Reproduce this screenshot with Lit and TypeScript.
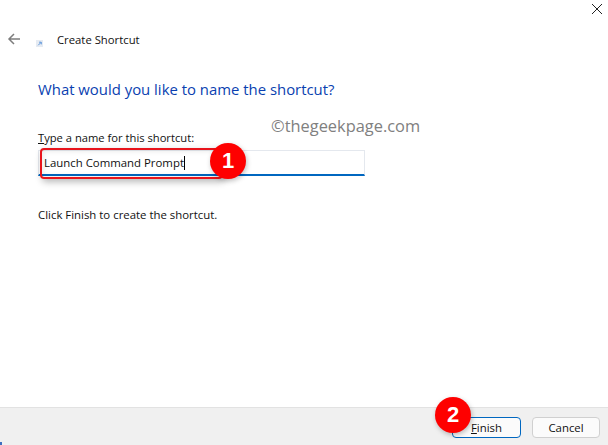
import { LitElement, html, css } from "lit";
import { customElement } from "lit/decorators.js";

@customElement("app-root")
export class AppRoot extends LitElement {
  static styles = css`
    :host {
      display: flex;
      flex-direction: column;
      width: 608px;
      height: 445px;
      position: relative;
      overflow: hidden;
      background: #fff;
      font-family: "Open Sans", "Noto Sans", sans-serif;
      font-size: 11.4px;
      color: #111;
    }
    .close {
      position: absolute;
      left: 590px;
      top: 2px;
      width: 14px;
      height: 14px;
    }
    .nav {
      display: flex;
      align-items: center;
      padding: 31px 0 0 7px;
      height: 18px;
    }
    .back { width: 14px; height: 14px; display: block; margin-top: -2px; }
    .sicon { width: 7px; height: 7px; margin: 6px 1px 0 15px; display: block; }
    .navtitle { margin: -2px 0 0 13px; font-size: 11.3px; }
    .body {
      flex: 1;
      display: flex;
      flex-direction: column;
      padding: 0 0 0 38px;
    }
    h1 {
      margin: 30px 0 0;
      font-size: 14.9px;
      line-height: 20px;
      font-weight: 400;
      color: #0a3fb0;
    }
    .label { margin-top: 31px; line-height: 16px; font-size: 11.2px; }
    .label u { text-decoration-thickness: 1px; }
    .input {
      position: relative;
      margin-top: 4px;
      width: 327px;
      height: 26px;
      box-sizing: border-box;
      border: 1px solid #e4e8ee;
      border-bottom: 2px solid #0067c0;
      display: flex;
      align-items: center;
      padding-left: 5px;
    }
    .caret {
      display: inline-block;
      width: 1px;
      height: 14px;
      background: #000;
    }
    .hint { margin-top: 31px; line-height: 16px; }
    .mark {
      position: absolute;
      left: 271px;
      top: 116px;
      font-size: 16.4px;
      color: #808080;
      line-height: 20px;
    }
    .footer {
      height: 37px;
      background: #f0f0f0;
      border-top: 1px solid #e2e2e2;
      display: flex;
      justify-content: flex-end;
      align-items: center;
      gap: 11px;
      padding: 0 8px 0 0;
    }
    .btn {
      width: 68px;
      height: 21px;
      box-sizing: border-box;
      margin-top: 1px;
      border-radius: 4px;
      background: #fbfbfb;
      border: 1px solid #d0d0d0;
      display: flex;
      align-items: center;
      justify-content: center;
    }
    .btn.primary { width: 69px; border-color: #0067c0; }
    .hl {
      position: absolute;
      left: 40px;
      top: 148px;
      width: 183px;
      height: 31px;
      box-sizing: border-box;
      border: 2px solid #e8141c;
      border-radius: 4px;
      box-shadow: 2px 3px 7px rgba(0, 0, 0, 0.28), inset 0 0 6px rgba(0, 0, 0, 0.12);
    }
    .badge {
      position: absolute;
      width: 36px;
      height: 36px;
      border-radius: 50%;
      background: #fe0000;
      color: #fff;
      font-family: "Liberation Sans", sans-serif;
      font-weight: 700;
      font-size: 22px;
      display: flex;
      align-items: center;
      justify-content: center;
      box-shadow: 1px 2px 5px rgba(0, 0, 0, 0.25);
    }
    .b1 { left: 210px; top: 143px; }
    .b2 { left: 435px; top: 397px; }
    .corner {
      position: absolute;
      left: 0;
      bottom: 0;
      width: 2px;
      height: 3px;
      background: #3f6fc0;
    }
  `;

  render() {
    return html`
      <svg class="close" viewBox="0 0 14 14" fill="none" stroke="#222" stroke-width="1">
        <path d="M2 2l10 10M12 2L2 12" />
      </svg>
      <div class="nav">
        <svg class="back" viewBox="0 0 14 14" fill="none" stroke="#7d7d7d" stroke-width="1.5">
          <path d="M13 7H2M7 2L2 7l5 5" />
        </svg>
        <svg class="sicon" viewBox="0 0 8 8">
          <rect width="8" height="8" fill="#e6ebf2" />
          <path d="M2.5 6L5.5 3M3.5 2.5H6V5" fill="none" stroke="#4a8ad8" stroke-width="1" />
        </svg>
        <span class="navtitle">Create Shortcut</span>
      </div>
      <div class="body">
        <h1>What would you like to name the shortcut?</h1>
        <div class="label"><u>T</u>ype a name for this shortcut:</div>
        <div class="input"><span>Launch Command Prompt</span><span class="caret"></span></div>
        <div class="hint">Click Finish to create the shortcut.</div>
      </div>
      <div class="mark">©thegeekpage.com</div>
      <div class="footer">
        <div class="btn primary"><span><u>F</u>inish</span></div>
        <div class="btn">Cancel</div>
      </div>
      <div class="hl"></div>
      <div class="badge b1">1</div>
      <div class="badge b2">2</div>
      <div class="corner"></div>
    `;
  }
}
